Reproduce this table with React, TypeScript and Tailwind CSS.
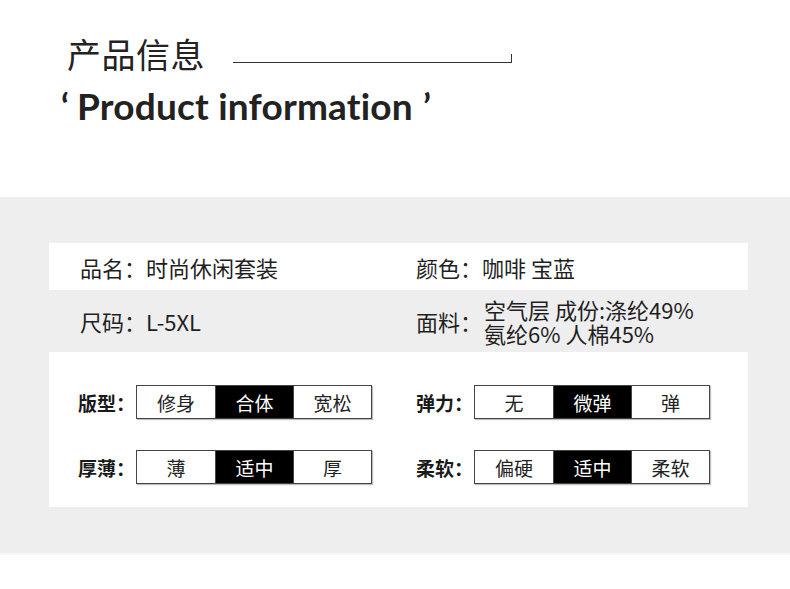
const cjk = "font-['Noto_Sans_CJK_SC','Noto_Sans',sans-serif]";

function Options({ label, items, active }: { label: string; items: string[]; active: number }) {
  return (
    <div className="flex items-center">
      <span className="w-[58px] text-[19px] font-bold text-[#1a1a1a] leading-none">{label}</span>
      <div className="flex h-[34px] border border-[#444] shadow-[1px_1px_1px_rgba(0,0,0,0.25)]">
        {items.map((t, i) => (
          <div
            key={t}
            className={
              "w-[78px] flex items-center justify-center text-[19px] leading-none " +
              (i === active ? "bg-black text-white" : "bg-white text-[#222]") +
              (i > 0 ? " border-l border-[#444]" : "")
            }
          >
            {t}
          </div>
        ))}
      </div>
    </div>
  );
}

export default function App() {
  return (
    <div className={`w-[790px] h-[589px] bg-white overflow-hidden ${cjk}`}>
      {/* header */}
      <div className="h-[197px] pt-[34px] pl-[67px]">
        <div className="flex items-center">
          <span className="text-[34px] leading-[40px] text-[#222] tracking-[0.5px]">产品信息</span>
          <div className="ml-[28px] mt-[8px] w-[279px] h-[9px] border-b border-r border-[#333]" />
        </div>
        <div className="mt-[10px] -ml-[6px] flex items-start font-['Lato',sans-serif] font-bold text-[#222]">
          <span className="text-[36px] leading-[44px]">‘</span>
          <span className="ml-[8px] text-[37px] leading-[44px] tracking-[0.2px]">Product information</span>
          <span className="ml-[10px] text-[36px] leading-[44px]">’</span>
        </div>
      </div>

      {/* panel */}
      <div className="bg-[#eeeeee] pt-[46px] pb-[46px] pl-[49px] pr-[42px]">
        <div className="h-[47px] bg-white flex items-center text-[22px] text-[#1f1f1f] leading-none">
          <div className="w-[367px] pl-[31px]">品名：时尚休闲套装</div>
          <div>颜色：咖啡 宝蓝</div>
        </div>
        <div className="h-[62px] flex items-center text-[22px] text-[#1f1f1f] leading-none">
          <div className="w-[367px] pl-[31px]">尺码：L-5XL</div>
          <div className="flex items-center">
            <span>面料：</span>
            <div className="flex flex-col leading-[24px] ml-[2px]">
              <span>空气层 成份:涤纶49%</span>
              <span>氨纶6% 人棉45%</span>
            </div>
          </div>
        </div>
        <div className="h-[155px] bg-white pt-[33px] flex flex-col gap-[31px]">
          <div className="flex">
            <div className="w-[367px] pl-[29px]">
              <Options label="版型：" items={["修身", "合体", "宽松"]} active={1} />
            </div>
            <Options label="弹力：" items={["无", "微弹", "弹"]} active={1} />
          </div>
          <div className="flex">
            <div className="w-[367px] pl-[29px]">
              <Options label="厚薄：" items={["薄", "适中", "厚"]} active={1} />
            </div>
            <Options label="柔软：" items={["偏硬", "适中", "柔软"]} active={1} />
          </div>
        </div>
      </div>
      <div className="h-[2px] bg-[#f6f6f6]" />
    </div>
  );
}
